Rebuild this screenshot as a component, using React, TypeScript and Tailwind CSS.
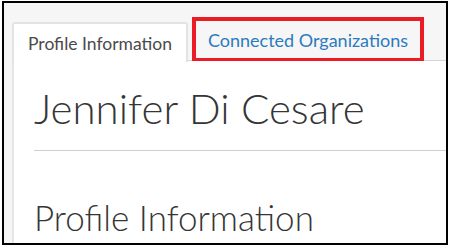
export default function App() {
  return (
    <div className="w-[451px] h-[249px] bg-white" style={{ fontFamily: 'Lato, "Open Sans", sans-serif' }}>
      <div className="ml-[2px] mt-[1px] w-[446px] h-[244px] border-2 border-black overflow-hidden bg-[#f6f6f6] flex flex-col">
        <div className="flex items-end h-[58px] pl-[8px] shrink-0">
          <div className="h-[40px] w-[176px] flex items-center justify-center bg-white border-2 border-b-0 border-[#e3e3e3] rounded-t-[3px] text-[17.5px] text-[#4a4a4a] -mb-[1px] pt-[3px] relative z-10">
            Profile Information
          </div>
          <div className="flex-1 h-full flex items-end border-b border-[#d4d4d4]">
            <div className="ml-[4px] mb-[-2px] h-[45px] w-[232px] border-4 border-[#ec1c24] flex items-center justify-center text-[18px] text-[#2c7bbf] pt-[1px]">
              Connected Organizations
            </div>
          </div>
        </div>
        <div className="flex-1 ml-[8px] bg-white border-l-2 border-[#e6e6e6] pl-[20px] pt-[23px]">
          <h1 className="text-[42px] font-light leading-[48px] text-[#353535]">Jennifer Di Cesare</h1>
          <div className="mt-[18px] border-t border-[#cfcfcf] -mr-[4px]" />
          <h2 className="mt-[46px] text-[35px] font-light leading-[40px] text-[#353535]">Profile Information</h2>
        </div>
      </div>
    </div>
  );
}
